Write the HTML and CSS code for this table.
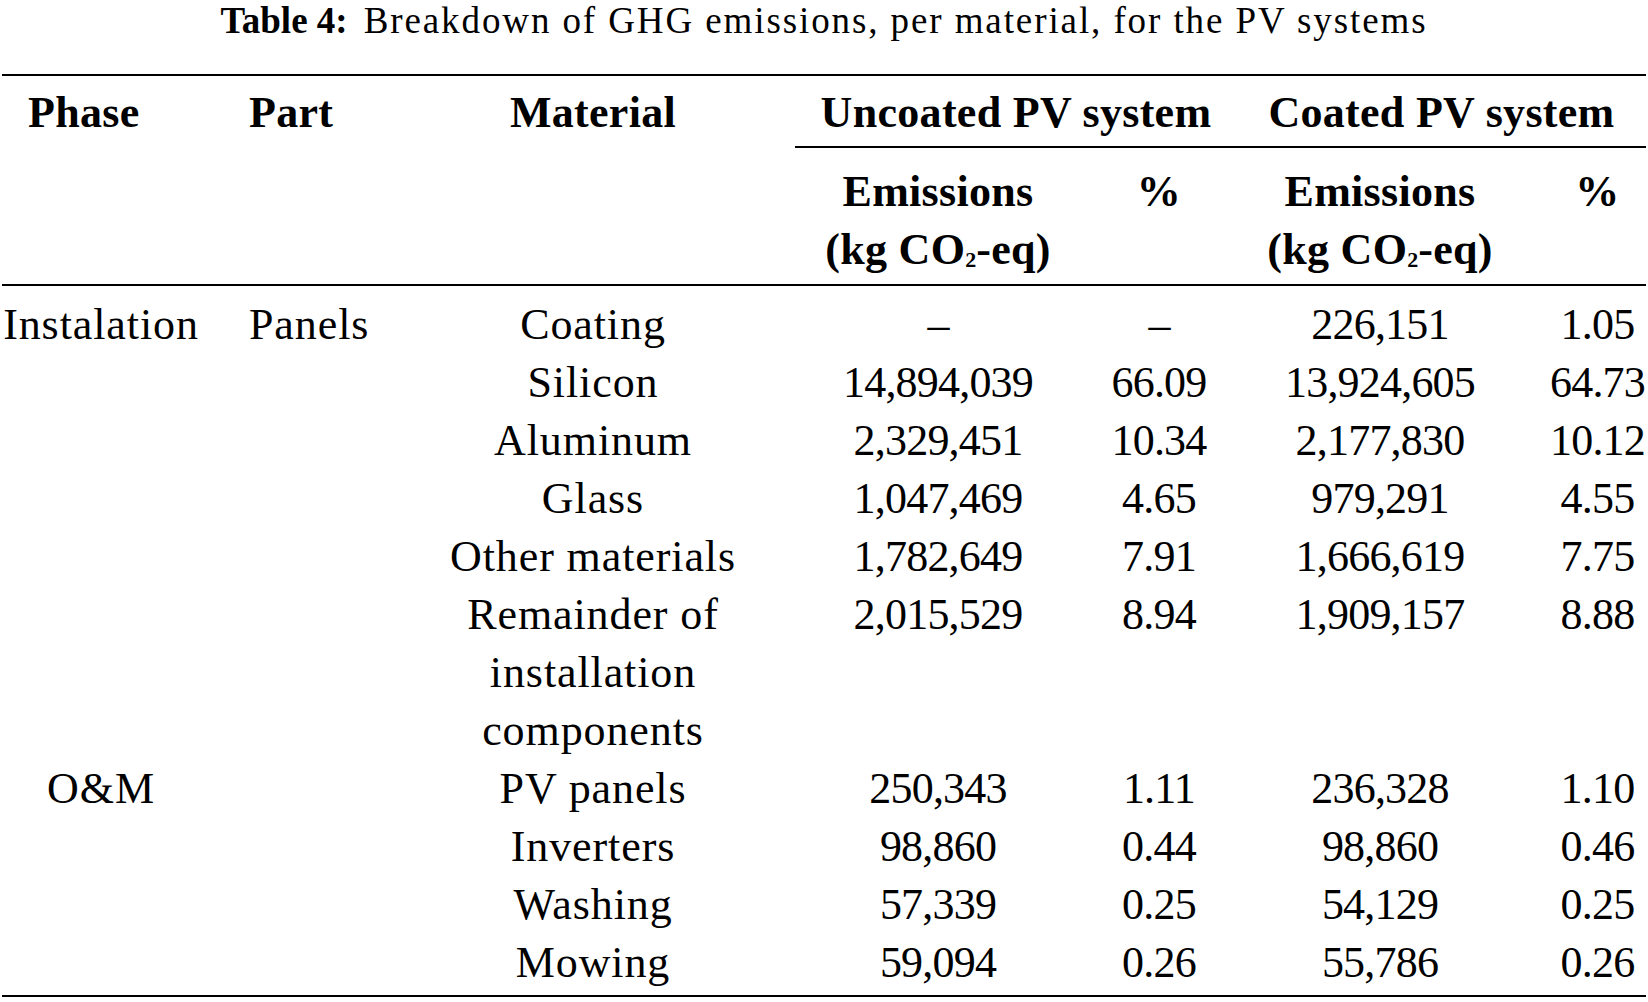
FILE: index.html
```html
<!DOCTYPE html>
<html lang="en">
<head>
<meta charset="utf-8">
<title>Table 4</title>
<link rel="stylesheet" href="styles.css">
</head>
<body>
<div class="caption"><span class="cap-label">Table 4:</span><span class="cap-text">Breakdown of GHG emissions, per material, for the PV systems</span></div>
<div class="table">
  <div class="th th-phase">Phase</div>
  <div class="th th-part">Part</div>
  <div class="th th-mat">Material</div>
  <div class="spacer"></div>
  <div class="th th-group g-uncoated">Uncoated PV system</div>
  <div class="th th-group g-coated">Coated PV system</div>

  <div class="cmidrule"></div>

  <div class="th sub c-em1">Emissions<br>(kg CO<sub class="sub2">2</sub>-eq)</div>
  <div class="th sub c-p1">%</div>
  <div class="th sub c-em2">Emissions<br>(kg CO<sub class="sub2">2</sub>-eq)</div>
  <div class="th sub c-p2">%</div>

  <div class="midrule"></div>

  <div class="td c-phase txt">Instalation</div>
  <div class="td c-part txt">Panels</div>
  <div class="td c-mat txt">Coating</div>
  <div class="td c-em1 num">–</div>
  <div class="td c-p1 num">–</div>
  <div class="td c-em2 num">226,151</div>
  <div class="td c-p2 num">1.05</div>

  <div class="td c-mat txt">Silicon</div>
  <div class="td c-em1 num">14,894,039</div>
  <div class="td c-p1 num">66.09</div>
  <div class="td c-em2 num">13,924,605</div>
  <div class="td c-p2 num">64.73</div>

  <div class="td c-mat txt">Aluminum</div>
  <div class="td c-em1 num">2,329,451</div>
  <div class="td c-p1 num">10.34</div>
  <div class="td c-em2 num">2,177,830</div>
  <div class="td c-p2 num">10.12</div>

  <div class="td c-mat txt">Glass</div>
  <div class="td c-em1 num">1,047,469</div>
  <div class="td c-p1 num">4.65</div>
  <div class="td c-em2 num">979,291</div>
  <div class="td c-p2 num">4.55</div>

  <div class="td c-mat txt">Other materials</div>
  <div class="td c-em1 num">1,782,649</div>
  <div class="td c-p1 num">7.91</div>
  <div class="td c-em2 num">1,666,619</div>
  <div class="td c-p2 num">7.75</div>

  <div class="td c-mat txt">Remainder of installation components</div>
  <div class="td c-em1 num">2,015,529</div>
  <div class="td c-p1 num">8.94</div>
  <div class="td c-em2 num">1,909,157</div>
  <div class="td c-p2 num">8.88</div>

  <div class="td c-phase txt">O&amp;M</div>
  <div class="td c-mat txt">PV panels</div>
  <div class="td c-em1 num">250,343</div>
  <div class="td c-p1 num">1.11</div>
  <div class="td c-em2 num">236,328</div>
  <div class="td c-p2 num">1.10</div>

  <div class="td c-mat txt">Inverters</div>
  <div class="td c-em1 num">98,860</div>
  <div class="td c-p1 num">0.44</div>
  <div class="td c-em2 num">98,860</div>
  <div class="td c-p2 num">0.46</div>

  <div class="td c-mat txt">Washing</div>
  <div class="td c-em1 num">57,339</div>
  <div class="td c-p1 num">0.25</div>
  <div class="td c-em2 num">54,129</div>
  <div class="td c-p2 num">0.25</div>

  <div class="td c-mat txt">Mowing</div>
  <div class="td c-em1 num">59,094</div>
  <div class="td c-p1 num">0.26</div>
  <div class="td c-em2 num">55,786</div>
  <div class="td c-p2 num">0.26</div>
</div>
</body>
</html>
```

FILE: styles.css
```css
html, body {
  margin: 0;
  padding: 0;
  background: #ffffff;
  color: #000000;
  overflow: hidden;
}

body {
  font-family: "Liberation Serif", "Times New Roman", serif;
}

.caption {
  text-align: center;
  font-size: 37px;
  line-height: 42px;
  height: 42px;
  white-space: nowrap;
}

.cap-label {
  font-weight: bold;
  margin-right: 16px;
}

.cap-text {
  letter-spacing: 1.9px;
}

.table {
  display: grid;
  grid-template-columns: 198px 240px 306px 49px 286px 156px 286px 123px;
  margin: 32px 0 0 2px;
  width: 1644px;
  border-top: 2px solid #000;
  border-bottom: 2px solid #000;
  padding: 8px 0 3px;
  font-size: 44px;
  line-height: 58px;
  align-items: start;
}

.th {
  font-weight: bold;
  letter-spacing: 0.3px;
  text-align: center;
}

.th-phase {
  grid-column: 1;
  text-align: left;
  padding-left: 26px;
}

.th-part {
  grid-column: 2;
  text-align: left;
  padding-left: 49px;
}

.th-mat {
  grid-column: 3;
}

.spacer {
  grid-column: 4;
}

.g-uncoated {
  grid-column: 5 / 7;
}

.g-coated {
  grid-column: 7 / 9;
}

.cmidrule {
  grid-column: 5 / 9;
  height: 2px;
  background: #000;
  margin: 4px 0 15px;
}

.midrule {
  grid-column: 1 / -1;
  height: 2px;
  background: #000;
  margin: 5px 0 10px;
}

.sub2 {
  font-size: 0.5em;
  line-height: 0;
  vertical-align: -0.15em;
  letter-spacing: 0;
}

.td {
  text-align: center;
}

.txt {
  letter-spacing: 0.9px;
}

.num {
  letter-spacing: -0.8px;
}

.c-phase {
  grid-column: 1;
}

.c-part {
  grid-column: 2;
  text-align: left;
  padding-left: 49px;
}

.c-mat {
  grid-column: 3;
}

.c-em1 {
  grid-column: 5;
}

.c-p1 {
  grid-column: 6;
}

.c-em2 {
  grid-column: 7;
}

.c-p2 {
  grid-column: 8;
  padding-left: 26px;
}
```
